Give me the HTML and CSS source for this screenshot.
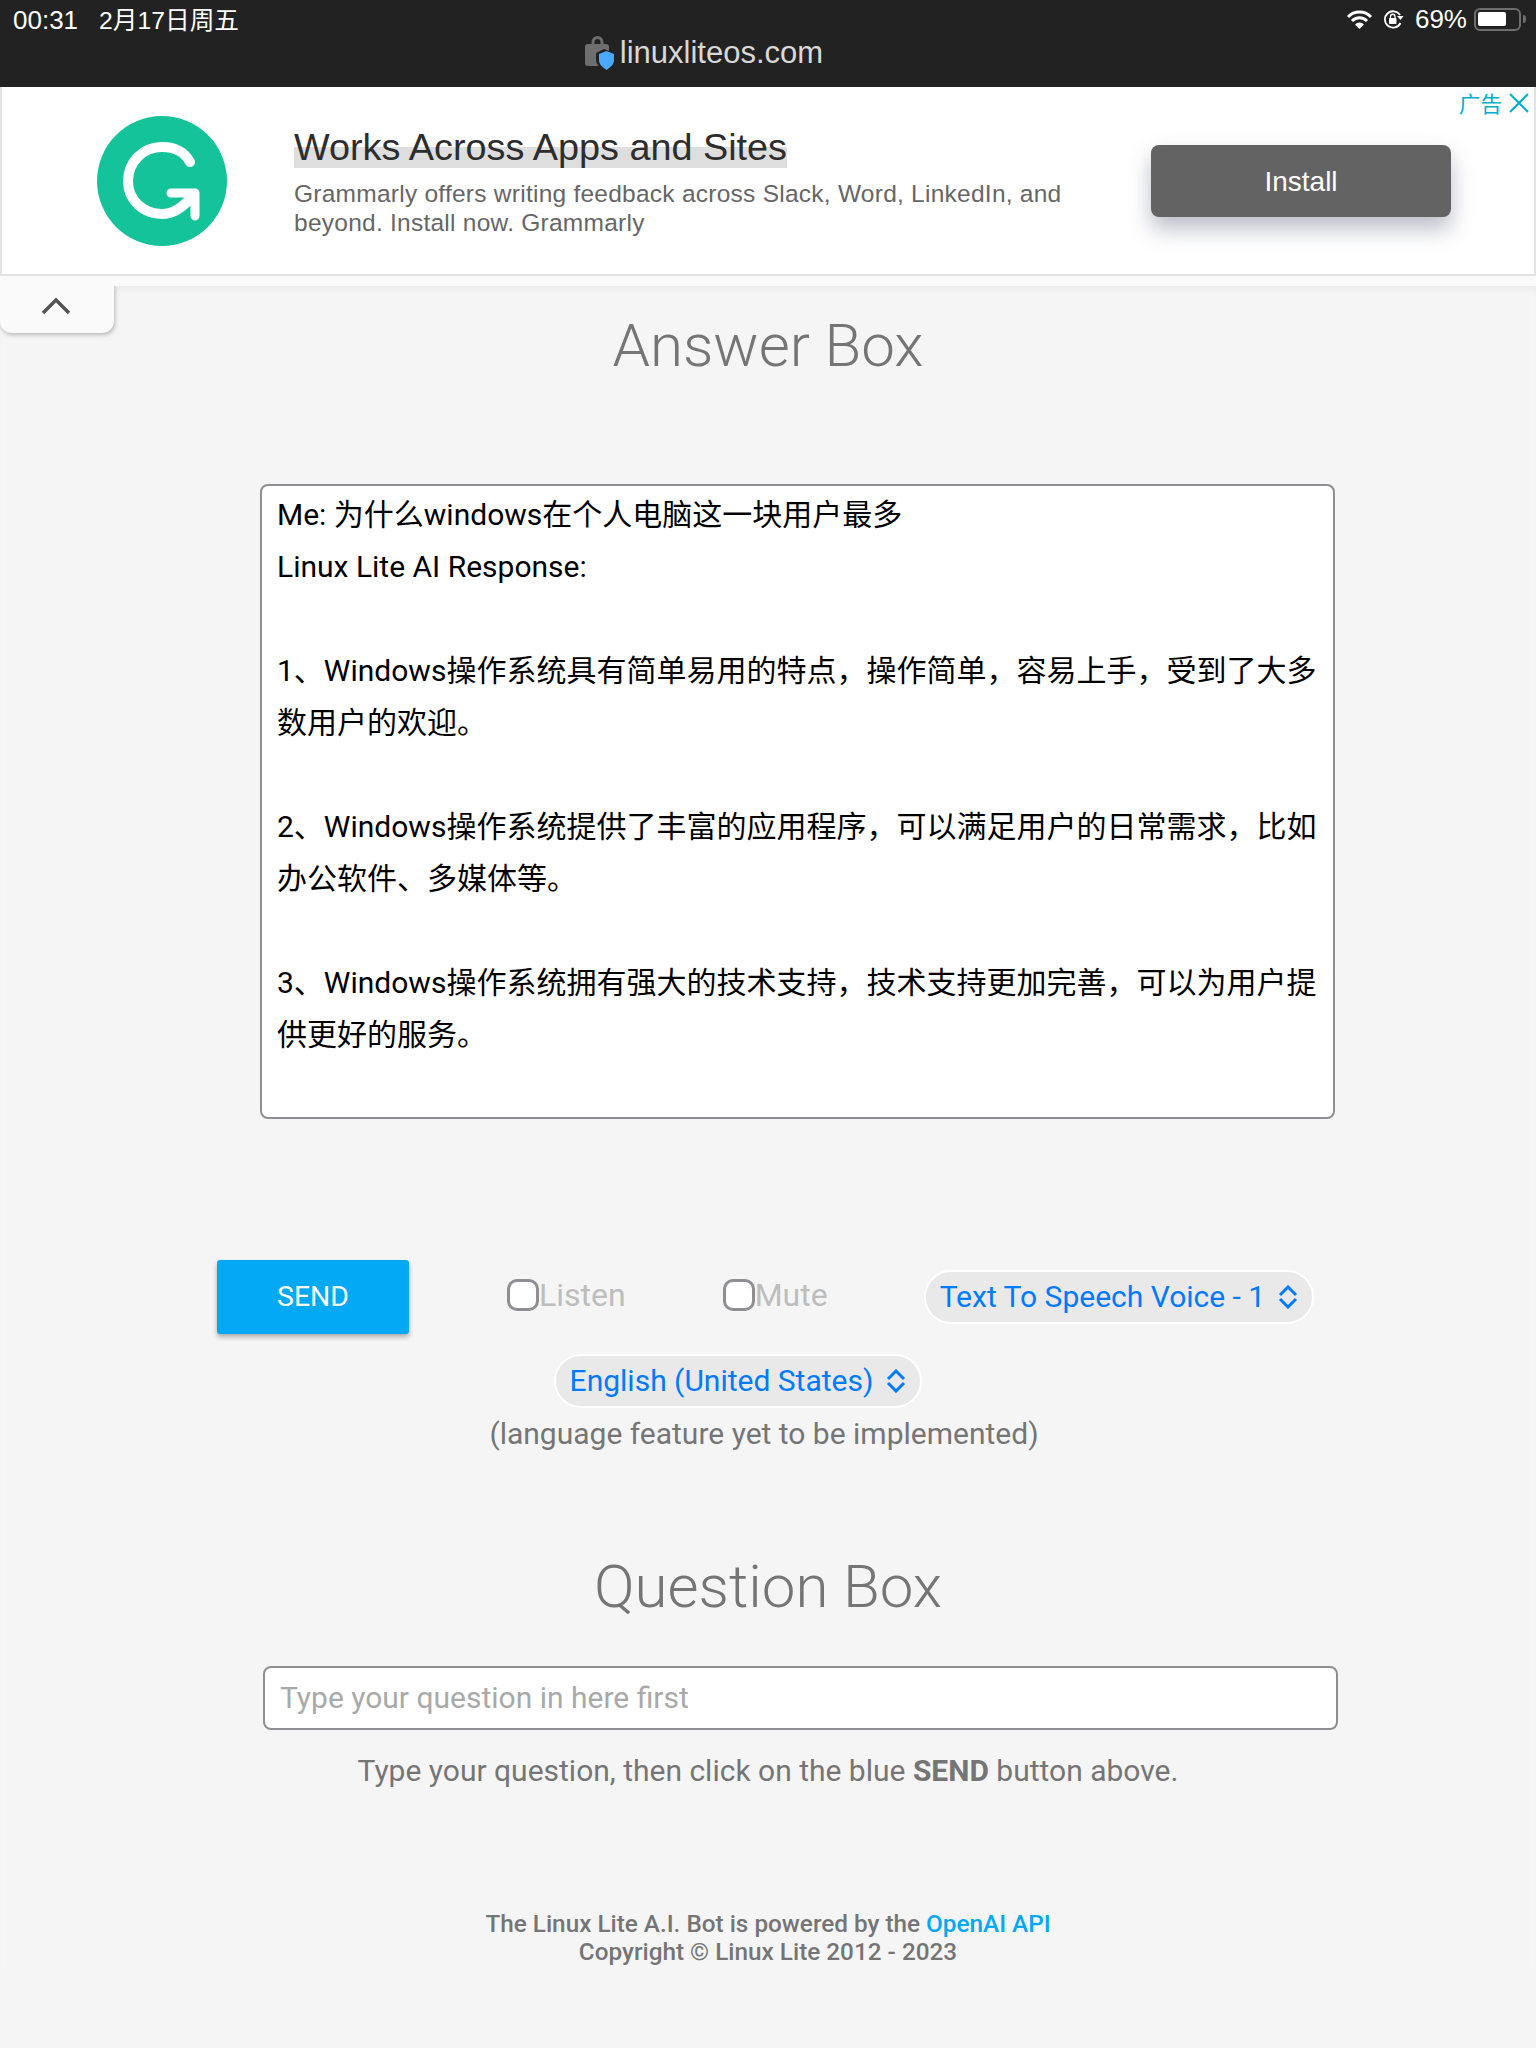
FILE: index.html
```html
<!DOCTYPE html>
<html lang="en">
<head>
  <meta charset="UTF-8" />
  <meta name="viewport" content="width=device-width, initial-scale=1.0" />
  <title>Linux Lite A.I. Bot</title>
  <link rel="stylesheet" href="styles.css">
</head>
<body>
  <header class="browser-bar">
    <div class="status-row">
      <div class="status-left">
        <span>00:31</span>
        <span class="status-date">2月17日周五</span>
      </div>
      <div class="status-right">
        <svg class="wifi-icon" width="27" height="20" viewBox="0 0 27 20">
          <path d="M2 8a16 16 0 0 1 23 0M6 12a10.500 10.500 0 0 1 15 0" fill="none" stroke="#fff" stroke-width="3"/>
          <path d="M13.500 20l-4.500-4.500a6 6 0 0 1 9 0z" fill="#fff"/>
        </svg>
        <svg class="lock-icon" width="21" height="20" viewBox="0 0 21 20">
          <path d="M17 6A8.200 8.200 0 1 0 17.500 14" fill="none" stroke="#fff" stroke-width="1.800"/>
          <path d="M14 7h6.500l-3 4z" fill="#fff"/>
          <rect x="6" y="9" width="7.500" height="6" rx="1" fill="#fff"/>
          <path d="M7.500 9.500V7.500a2.200 2.200 0 0 1 4.500 0v2" fill="none" stroke="#fff" stroke-width="1.300"/>
        </svg>
        <span>69%</span>
        <div class="battery"><div class="battery-fill"></div></div>
        <div class="battery-tip"></div>
      </div>
    </div>
    <div class="url-row">
      <svg class="site-icon" width="29" height="34" viewBox="0 0 29 34">
        <path d="M8 9V6a4.500 4.500 0 0 1 9 0v3" fill="none" stroke="#6e6e6e" stroke-width="3"/>
        <rect x="0" y="8" width="24" height="22" rx="3" fill="#6e6e6e"/>
        <path d="M19 13l10 4v7c0 5-4 8-7 10h-3c-3-2-8-5-8-10v-7z" fill="#222"/>
        <path d="M21.500 15l7.500 3v6c0 4-3 7-7.500 10C17 31 14 28 14 24v-6z" fill="#4aa8ff"/>
      </svg>
      <span>linuxliteos.com</span>
    </div>
  </header>

  <section class="ad-banner">
    <div class="ad-label">
      <span>广告</span>
      <svg width="20" height="20" viewBox="0 0 20 20">
        <path d="M1 1l18 18M19 1L1 19" fill="none" stroke="#00aecd" stroke-width="2"/>
      </svg>
    </div>
    <div class="ad-logo">
      <svg width="130" height="130" viewBox="0 0 130 130">
        <circle cx="65" cy="65" r="65" fill="#15c39a"/>
        <path d="M93 46C87 35 77 31 65 31 46 31 31 46 31 65 31 84 46 98 65 98 76 98 85 92 97 79" fill="none" stroke="#fff" stroke-width="10" stroke-linecap="round"/>
        <path d="M74 77H98V100" fill="none" stroke="#fff" stroke-width="9" stroke-linecap="round" stroke-linejoin="round"/>
      </svg>
    </div>
    <div class="ad-copy">
      <h2><mark>Works Across Apps and Sites</mark></h2>
      <p>Grammarly offers writing feedback across Slack, Word, LinkedIn, and beyond. Install now. Grammarly</p>
    </div>
    <button class="install-btn">Install</button>
  </section>

  <main class="page">
    <div class="collapse-tab">
      <svg width="30" height="20" viewBox="0 0 30 20">
        <path d="M2 17L15 4l13 13" fill="none" stroke="#555" stroke-width="3.500"/>
      </svg>
    </div>

    <h1 class="answer-title">Answer Box</h1>

    <div class="answer-box">Me: 为什么windows在个人电脑这一块用户最多
Linux Lite AI Response:

1、Windows操作系统具有简单易用的特点，操作简单，容易上手，受到了大多数用户的欢迎。

2、Windows操作系统提供了丰富的应用程序，可以满足用户的日常需求，比如办公软件、多媒体等。

3、Windows操作系统拥有强大的技术支持，技术支持更加完善，可以为用户提供更好的服务。</div>

    <div class="controls">
      <button class="send-btn">SEND</button>
      <label class="check-label listen"><span class="check-box"></span>Listen</label>
      <label class="check-label mute"><span class="check-box"></span>Mute</label>
      <div class="select-pill voice">
        <span class="pill-text">Text To Speech Voice - 1</span>
        <svg width="20" height="24" viewBox="0 0 20 24"><path d="M2 10l8-8 8 8M2 14l8 8 8-8" fill="none" stroke="#007aff" stroke-width="3"/></svg>
      </div>
    </div>

    <div class="language">
      <div class="select-pill language-select">
        <span class="pill-text">English (United States)</span>
        <svg width="20" height="24" viewBox="0 0 20 24"><path d="M2 10l8-8 8 8M2 14l8 8 8-8" fill="none" stroke="#007aff" stroke-width="3"/></svg>
      </div>
      <p class="language-note">(language feature yet to be implemented)</p>
    </div>

    <h1 class="question-title">Question Box</h1>

    <input class="question-input" type="text" placeholder="Type your question in here first" />
    <p class="question-help">Type your question, then click on the blue <b>SEND</b> button above.</p>

    <footer class="site-footer">
      <p>The Linux Lite A.I. Bot is powered by the <a href="#">OpenAI API</a></p>
      <p>Copyright © Linux Lite 2012 - 2023</p>
    </footer>
  </main>
</body>
</html>
```

FILE: styles.css
```css
* {
  margin: 0;
  padding: 0;
  box-sizing: border-box;
}

body {
  background-color: #f5f5f5;
  color: #757575;
  font-family: Roboto, "Noto Sans CJK SC", sans-serif;
  width: 1536px;
  height: 2048px;
  overflow: hidden;
}

.browser-bar {
  background-color: #222222;
  color: #ffffff;
  height: 87px;
}

.status-row {
  display: flex;
  justify-content: space-between;
  align-items: center;
  height: 38px;
  padding: 0 10px 0 13px;
  font-family: "Liberation Sans", "Noto Sans CJK SC", sans-serif;
  font-size: 26px;
}

.status-left {
  display: flex;
  align-items: baseline;
  gap: 21px;
  padding-bottom: 2px;
}

.status-date {
  font-size: 24.700px;
}

.status-right {
  display: flex;
  align-items: center;
}

.wifi-icon {
  margin-right: 10px;
}

.lock-icon {
  margin-right: 11px;
}

.battery {
  width: 47px;
  height: 23px;
  margin-left: 7px;
  border: 2px solid #6e6e6e;
  border-radius: 6px;
  padding: 2.500px 2px;
}

.battery-fill {
  width: 28px;
  height: 14px;
  background: #ffffff;
  border-radius: 2px;
}

.battery-tip {
  width: 3px;
  height: 8px;
  margin-left: 2px;
  background: #6e6e6e;
  border-radius: 0 3px 3px 0;
}

.url-row {
  display: flex;
  justify-content: center;
  align-items: center;
  gap: 6px;
  padding-right: 128px;
  font-family: "Liberation Sans", sans-serif;
  font-size: 31px;
  color: #d8d8d8;
  height: 30px;
}

.ad-banner {
  background: #ffffff;
  height: 189px;
  border: 2px solid #e2e2e2;
  border-top: none;
  position: relative;
  display: flex;
  align-items: center;
  font-family: "Liberation Sans", sans-serif;
}

.ad-label {
  position: absolute;
  top: 6px;
  right: 5px;
  display: flex;
  align-items: center;
  gap: 7px;
  color: #00aecd;
  font-family: "Noto Sans CJK SC", sans-serif;
  font-size: 21.500px;
  line-height: 20px;
}

.ad-logo {
  margin-left: 95px;
  width: 130px;
  height: 130px;
}

.ad-copy {
  margin-left: 67px;
  width: 800px;
}

.ad-copy h2 {
  font-size: 37.800px;
  font-weight: 400;
  color: #2d2d2d;
  line-height: 44px;
  margin-top: 1px;
  margin-bottom: 10px;
}

.ad-copy mark {
  color: inherit;
  background: linear-gradient(to bottom, transparent 50%, #dedede 50%);
}

.ad-copy p {
  font-size: 24.500px;
  letter-spacing: 0.250px;
  line-height: 29px;
  color: #666666;
}

.install-btn {
  position: absolute;
  left: 1149px;
  top: 58px;
  width: 300px;
  height: 72px;
  padding-top: 2px;
  background: #636363;
  color: #ffffff;
  border: none;
  border-radius: 8px;
  font-family: "Liberation Sans", sans-serif;
  font-size: 28px;
  box-shadow: 0 12px 22px rgba(60, 70, 100, 0.35);
}

.page {
  position: relative;
  display: flex;
  flex-direction: column;
  align-items: center;
  padding-top: 10px;
  border-top: 10px solid #fafafa;
  box-shadow: inset 0 6px 8px -4px rgba(0, 0, 0, 0.06);
}

/* small curve where the tab meets the band above the page */
.page::before {
  content: "";
  position: absolute;
  left: 114px;
  top: 0;
  width: 8px;
  height: 8px;
  background: radial-gradient(circle at 100% 100%, transparent 8px, #fafafa 8px);
}

.collapse-tab {
  position: absolute;
  left: 0;
  top: -10px;
  width: 114px;
  height: 57px;
  padding-top: 2px;
  padding-right: 2px;
  background: #fafafa;
  border-radius: 0 0 12px 12px;
  box-shadow: 1px 2px 4px rgba(0, 0, 0, 0.25);
  clip-path: inset(10px -8px -8px 0);
  display: flex;
  justify-content: center;
  align-items: center;
}

.answer-title,
.question-title {
  font-size: 60px;
  font-weight: 300;
  color: #757575;
  line-height: 70px;
}

.answer-title {
  margin-top: 15px;
  margin-bottom: 103px;
}

.answer-box {
  width: 1075px;
  height: 635px;
  margin-left: 59px;
  background: #ffffff;
  border: 2px solid #8e8e93;
  border-radius: 8px;
  padding: 3px 10px 3px 15px;
  color: #000000;
  font-size: 30px;
  line-height: 52px;
  white-space: pre-wrap;
}

.controls {
  width: 100%;
  display: flex;
  align-items: center;
  margin-top: 141px;
  padding-left: 217px;
}

.send-btn {
  width: 192px;
  height: 74px;
  background: #03a9f4;
  color: #ffffff;
  border: none;
  border-radius: 3px;
  padding-bottom: 2px;
  font-family: Roboto, sans-serif;
  font-size: 28.400px;
  box-shadow: 0 3px 5px rgba(0, 0, 0, 0.3);
}

.check-label {
  display: flex;
  align-items: center;
  margin-bottom: 4px;
  font-size: 32px;
  line-height: 36px;
  color: #bdbdbd;
}

.listen {
  margin-left: 98px;
}

.mute {
  margin-left: 97px;
}

.check-box {
  width: 32px;
  height: 32px;
  background: #ffffff;
  border: 3px solid #8e8e93;
  border-radius: 10px;
}

.select-pill {
  display: inline-flex;
  align-items: center;
  gap: 13px;
  height: 54px;
  padding: 0 14px 0 14px;
  background: #e9e9e9;
  border: 2px solid #ffffff;
  border-radius: 27px;
  color: #007aff;
  font-size: 30px;
}

.pill-text {
  padding-bottom: 2px;
}

.voice {
  margin-left: 96px;
}

.language {
  display: flex;
  flex-direction: column;
  align-items: center;
  margin-top: 20px;
}

.language-select {
  margin-right: 60px;
}

.language-note {
  font-size: 30px;
  line-height: 36px;
  margin-top: 8px;
  margin-right: 8px;
}

.question-title {
  margin-top: 100px;
}

.question-input {
  width: 1075px;
  height: 64px;
  margin-top: 44px;
  margin-left: 65px;
  background: #ffffff;
  border: 2px solid #8e8e93;
  border-radius: 8px;
  padding: 0 15px 2px;
  font-family: Roboto, sans-serif;
  font-size: 30px;
}

.question-input::placeholder {
  color: #a9a9a9;
}

.question-help {
  font-size: 30px;
  line-height: 36px;
  margin-top: 23px;
}

.site-footer {
  margin-top: 121px;
  text-align: center;
  font-size: 24.300px;
  font-weight: 500;
  line-height: 28px;
}

.site-footer a {
  color: #03a9f4;
  text-decoration: none;
}
```
